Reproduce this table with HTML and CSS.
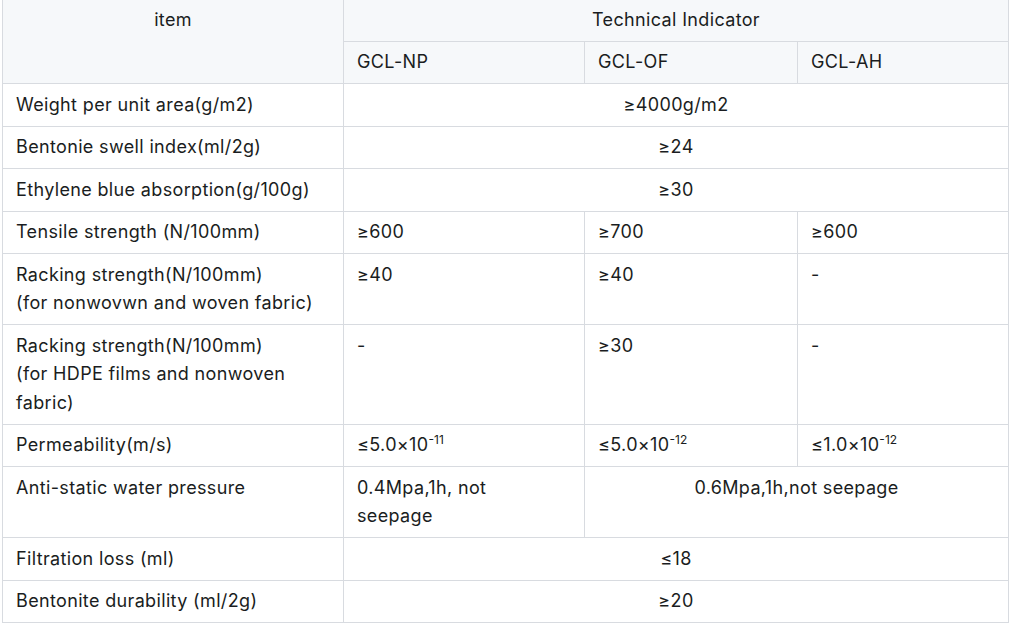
FILE: index.html
```html
<!DOCTYPE html>
<html>
<head>
<meta charset="utf-8">
<link rel="stylesheet" href="styles.css">
</head>
<body>
<div class="wrap">
<table class="spec">
  <colgroup>
    <col class="c-item">
    <col class="c-np">
    <col class="c-of">
    <col class="c-ah">
  </colgroup>
  <thead>
    <tr>
      <th rowspan="2" class="center">item</th>
      <th colspan="3" class="center">Technical Indicator</th>
    </tr>
    <tr>
      <th>GCL-NP</th>
      <th>GCL-OF</th>
      <th>GCL-AH</th>
    </tr>
  </thead>
  <tbody>
    <tr><td>Weight per unit area(g/m2)</td><td colspan="3" class="center">≥4000g/m2</td></tr>
    <tr><td>Bentonie swell index(ml/2g)</td><td colspan="3" class="center">≥24</td></tr>
    <tr><td>Ethylene blue absorption(g/100g)</td><td colspan="3" class="center">≥30</td></tr>
    <tr><td>Tensile strength (N/100mm)</td><td>≥600</td><td>≥700</td><td>≥600</td></tr>
    <tr><td>Racking strength(N/100mm)<br>(for nonwovwn and woven fabric)</td><td>≥40</td><td>≥40</td><td>-</td></tr>
    <tr><td>Racking strength(N/100mm)<br>(for HDPE films and nonwoven fabric)</td><td>-</td><td>≥30</td><td>-</td></tr>
    <tr><td>Permeability(m/s)</td><td>≤5.0×10<sup>-11</sup></td><td>≤5.0×10<sup>-12</sup></td><td>≤1.0×10<sup>-12</sup></td></tr>
    <tr><td>Anti-static water pressure</td><td>0.4Mpa,1h, not<br>seepage</td><td colspan="2" class="center">0.6Mpa,1h,not seepage</td></tr>
    <tr><td>Filtration loss (ml)</td><td colspan="3" class="center">≤18</td></tr>
    <tr><td>Bentonite durability (ml/2g)</td><td colspan="3" class="center">≥20</td></tr>
  </tbody>
</table>
</div>
</body>
</html>
```

FILE: styles.css
```css
html, body {
  margin: 0;
  padding: 0;
  background: #ffffff;
}

.wrap {
  padding-left: 2px;
  margin-top: -2px;
}

.spec {
  border-collapse: collapse;
  table-layout: fixed;
  width: 1006px;
  font-family: Inter, "Noto Sans", sans-serif;
  font-size: 18px;
  letter-spacing: 0.35px;
  line-height: 28.5px;
  color: #1a1d21;
}

.c-item { width: 341px; }
.c-np { width: 241px; }
.c-of { width: 213px; }
.c-ah { width: 211px; }

.spec th,
.spec td {
  border: 1px solid #d8dbe0;
  padding: 6.5px 13px;
  text-align: left;
  vertical-align: top;
  font-weight: 400;
}

.spec thead th {
  background: #f6f8fa;
}

.spec .center {
  text-align: center;
}

.spec sup {
  font-size: 12px;
  letter-spacing: 0;
  line-height: 0;
  vertical-align: 0.55em;
}
```
